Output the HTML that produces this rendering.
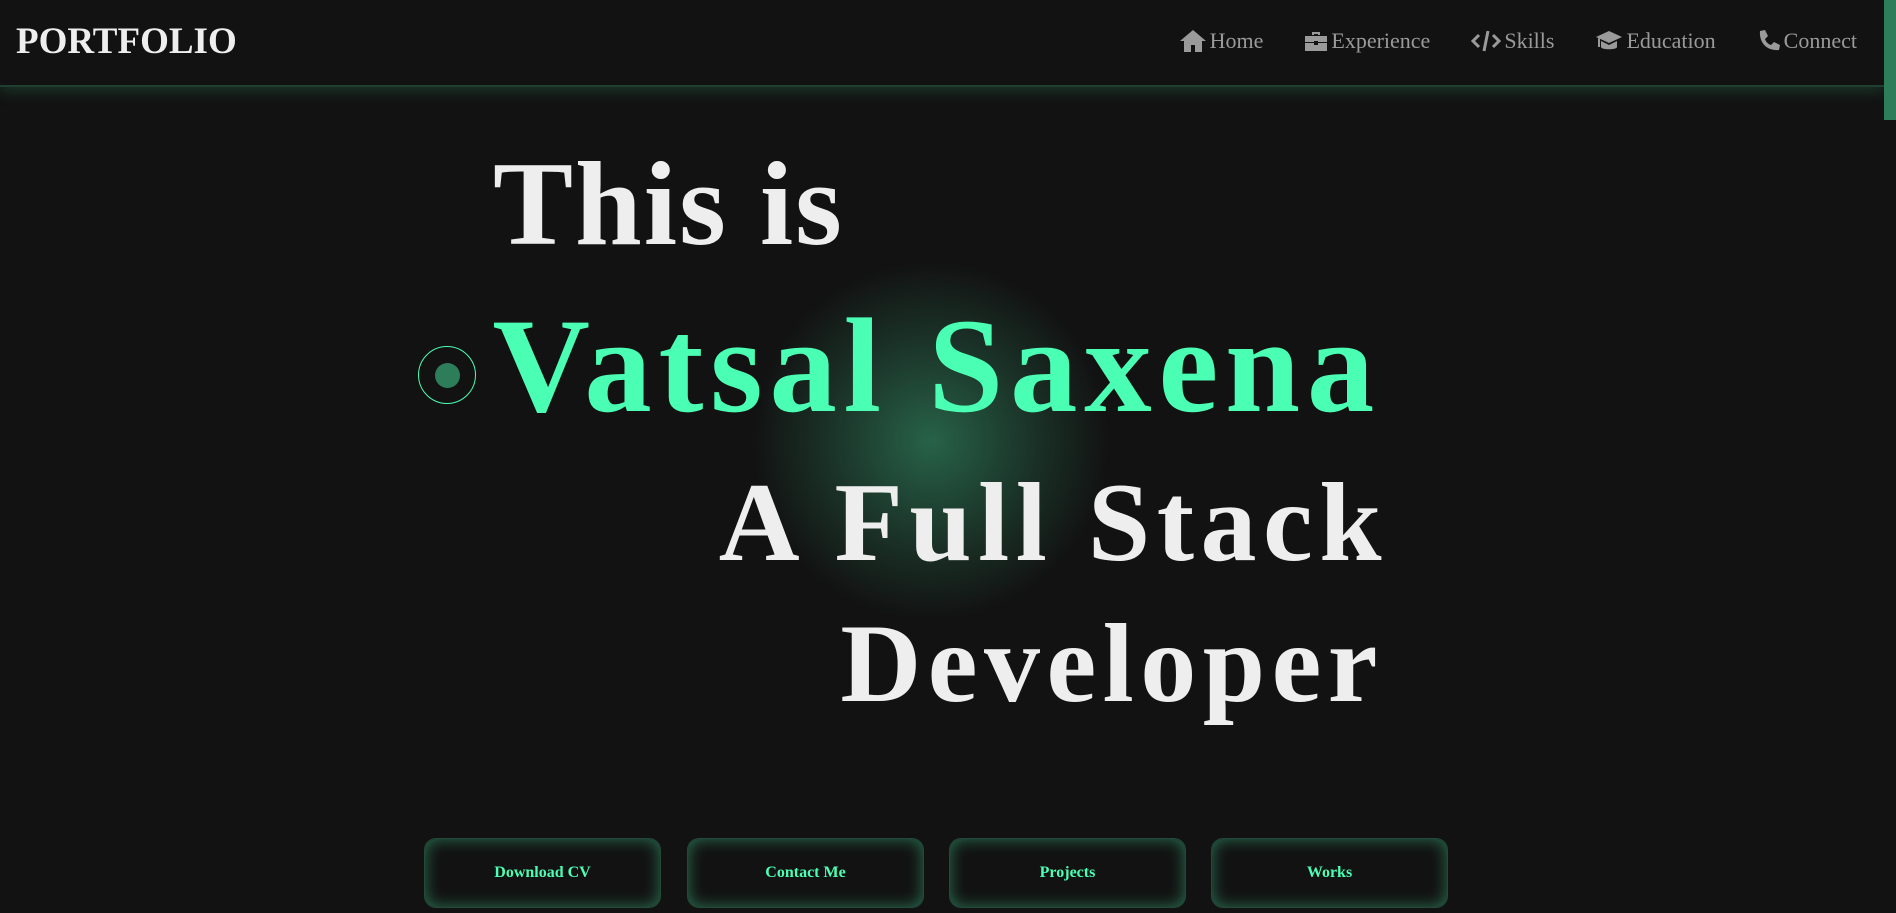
<!DOCTYPE html>
<html><head><meta charset="utf-8"><style>
*{margin:0;padding:0;box-sizing:border-box}
html,body{width:1896px;height:913px;overflow:hidden;background:#121212;font-family:"Liberation Serif",serif}
.nav{position:absolute;left:0;top:0;width:1884px;height:87px;background:#121212;border-bottom:2px solid #1f3f33;box-shadow:0 4px 14px rgba(46,125,90,.35)}
.logo{position:absolute;left:16px;top:20px;font-size:37px;font-weight:bold;color:#eee}
.menu{position:absolute;right:27px;top:28px;display:flex;gap:41px;font-size:22px;color:#9a9a9a}
.menu span{display:flex;align-items:center;gap:3px}
.menu svg{fill:#9a9a9a}
.sb{position:absolute;right:0;top:0;width:12px;height:913px;background:#121212}
.sb div{width:12px;height:120px;background:#2e7d5a}
.glow{position:absolute;left:751px;top:261px;width:360px;height:360px;border-radius:50%;background:radial-gradient(circle,rgba(46,125,90,.75) 0%,rgba(46,125,90,.3) 40%,rgba(18,18,18,0) 70%)}
.t{position:absolute;font-weight:bold;white-space:nowrap;line-height:1}
.ring{position:absolute;left:418px;top:346px;width:58px;height:58px;border:1px solid #4affb4;border-radius:50%}
.ring div{position:absolute;left:16px;top:16px;width:25px;height:25px;border-radius:50%;background:#2e7d5a}
.btn{position:absolute;top:838px;width:237px;height:70px;border-radius:12px;background:#121212;box-shadow:inset 0 0 16px rgba(74,255,180,.4);border:1px solid #24483a;color:#4affb4;font-weight:bold;font-size:16px;display:flex;align-items:center;justify-content:center}
</style></head><body>
<div class="nav">
<div class="logo">PORTFOLIO</div>
<div class="menu">
<span><svg width="28" height="24" viewBox="0 0 28 24"><path d="M14 1L1 12h4v11h7v-7h4v7h7V12h4z"/></svg>Home</span>
<span><svg width="24" height="22" viewBox="0 0 24 22"><path d="M8 2h8v3h-2V4h-4v1H8zM1 6h22v6H14v-1h-4v1H1zM1 13h9v2h4v-2h9v8H1z"/></svg>Experience</span>
<span><svg width="30" height="24" viewBox="0 0 30 24"><path d="M8 6L2 12l6 6" stroke="#9a9a9a" stroke-width="3" fill="none"/><path d="M22 6l6 6-6 6" stroke="#9a9a9a" stroke-width="3" fill="none"/><path d="M17 2l-4 20" stroke="#9a9a9a" stroke-width="3"/></svg>Skills</span>
<span><svg width="28" height="24" viewBox="0 0 28 24"><path d="M14 2L1 8l13 6 13-6zM6 12v6c0 3 16 3 16 0v-6l-8 4zM3 9v9h2V10z"/></svg>Education</span>
<span><svg width="24" height="24" viewBox="0 0 24 24"><path d="M3 2l5-1 3 6-3 3c1 3 3 5 6 6l3-3 6 3-1 5c-12 1-20-7-19-19z"/></svg>Connect</span>
</div></div>
<div class="sb"><div></div></div>
<div class="glow"></div>
<div class="t" style="left:493px;top:144px;font-size:120px;letter-spacing:2px;color:#eee">This is</div>
<div class="ring"><div></div></div>
<div class="t" style="right:515px;top:299px;font-size:135px;letter-spacing:6.7px;color:#4affb4">Vatsal Saxena</div>
<div class="t" style="right:508px;top:467px;font-size:112px;letter-spacing:6.5px;color:#eee">A Full Stack</div>
<div class="t" style="right:512px;top:608px;font-size:112px;letter-spacing:6.5px;color:#eee">Developer</div>
<div class="btn" style="left:424px">Download CV</div>
<div class="btn" style="left:687px">Contact Me</div>
<div class="btn" style="left:949px">Projects</div>
<div class="btn" style="left:1211px">Works</div>
</body></html>
